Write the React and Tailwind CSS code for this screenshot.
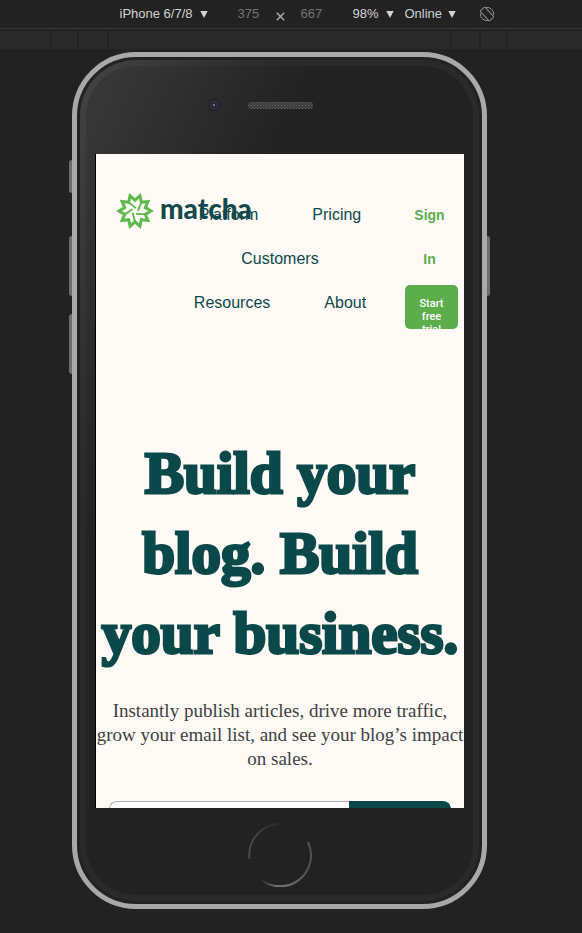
import React from "react";

const ARIAL = "font-['Liberation_Sans',Arial,sans-serif]";

function Picker({ label, width, options }) {
  return (
    <div className={"relative flex items-center " + width}>
      <select
        aria-label={label}
        className="w-full appearance-none bg-transparent p-0 text-[13px] leading-4 text-[#d2d2d2] outline-none"
      >
        {options.map((o) => (
          <option key={o}>{o}</option>
        ))}
      </select>
      <svg viewBox="0 0 8 7" className="pointer-events-none absolute right-0 h-[7px] w-2 fill-[#d2d2d2]" aria-hidden="true">
        <path d="M.3 0h7.4L4 7z" />
      </svg>
    </div>
  );
}

function Size({ label, value }) {
  return (
    <input
      aria-label={label}
      defaultValue={value}
      className="w-[22px] bg-transparent p-0 text-[13px] leading-4 text-[#747474] outline-none"
    />
  );
}

function Toolbar() {
  return (
    <div className="flex h-7 items-center justify-center pl-8">
      <Picker label="Device" width="w-[88px]" options={["iPhone 6/7/8"]} />
      <div className="mr-[30px] ml-[30px] flex items-center">
        <Size label="Width" value="375" />
        <svg viewBox="0 0 9 9" className="mx-4 mt-1 h-[9px] w-[9px] stroke-[#a8a8a8]" strokeWidth="1.5" aria-hidden="true">
          <path d="M.8.8l7.4 7.4M8.2.8L.8 8.2" />
        </svg>
        <Size label="Height" value="667" />
      </div>
      <div className="flex items-center gap-[11px]">
        <Picker label="Zoom" width="w-[41px]" options={["98%"]} />
        <Picker label="Throttling" width="w-[51px]" options={["Online"]} />
      </div>
      <button type="button" aria-label="Rotate" className="ml-[23px]">
        <svg viewBox="0 0 16 16" className="h-4 w-4 fill-none stroke-[#8d8d8d]" strokeWidth="1">
          <rect x="4.8" y="1.2" width="6.4" height="13.6" rx="1" transform="rotate(-42 8 8)" />
          <path d="M6.8 1.4A6.8 6.8 0 0 1 14.7 8.8M9.2 14.6A6.8 6.8 0 0 1 1.3 7.2" />
        </svg>
      </button>
    </div>
  );
}

function Ruler() {
  return (
    <div className="mt-[2px] flex h-[18px] justify-center bg-[#2a2a2a] pr-6">
      <div className="flex h-4">
        <div className="w-[27px] border-l-2 border-[#222]" />
        <div className="w-[30px] border-l-2 border-[#222]" />
        <div className="w-[345px] border-x-2 border-[#222]" />
        <div className="w-[29px] border-r-2 border-[#222]" />
        <div className="w-[27px] border-r-2 border-[#222]" />
      </div>
    </div>
  );
}

function LogoMark() {
  const n = 10;
  const pt = (r, deg) => {
    const a = (deg * Math.PI) / 180;
    return (20 + r * Math.cos(a)).toFixed(2) + " " + (20 + r * Math.sin(a)).toFixed(2);
  };
  const star = Array.from({ length: n }, (_, i) => pt(16, i * 36) + " L" + pt(10.8, i * 36 + 18)).join(" L");
  const spokes = Array.from({ length: n / 2 }, (_, i) => "M" + pt(10.8, i * 72 + 18) + " L" + pt(3, i * 72 + 70)).join(" ");
  return (
    <svg viewBox="0 0 40 40" className="h-10 w-10 fill-none stroke-[#5fba4d]" aria-hidden="true">
      <path d={"M" + star + "Z"} strokeWidth="3" />
      <path d={spokes} strokeWidth="1.9" />
    </svg>
  );
}

const links = ["Platform", "Pricing", "Customers", "Resources", "About"];

function Header() {
  return (
    <header className="relative flex justify-end pt-[39px] pr-[6px]">
      <a href="#" className="absolute top-[37px] left-[19px] flex items-center text-[#14494b]">
        <LogoMark />
        <span className="ml-[5px] pb-[7px] font-['Lato',sans-serif] text-[28px] leading-8 font-black">matcha</span>
      </a>
      <nav className={"relative flex w-[240px] flex-wrap content-start justify-center " + ARIAL}>
        {links.map((l) => (
          <a key={l} href="#" className="px-[27px] text-base leading-[44px] text-[#0b484a]">
            {l}
          </a>
        ))}
      </nav>
      <div className="ml-[5px] w-[53px] text-center">
        <a href="#" className={"block pr-3 pl-2 text-sm leading-[44px] font-bold text-[#5aae4b] " + ARIAL}>
          Sign In
        </a>
        <button
          type="button"
          className="mt-1 flex h-11 w-full items-start justify-center overflow-hidden rounded-[5px] bg-[#5cad4c] px-3 pt-3 font-['Roboto',sans-serif] text-[11px] leading-[13px] font-medium text-white"
        >
          Start free trial
        </button>
      </div>
    </header>
  );
}

function Page() {
  return (
    <div className="aspect-[368/654] overflow-hidden bg-[#fffaf6] shadow-[-1px_0_0_#000]">
      <Header />
      <main className="text-center font-['Liberation_Serif',serif]">
        <h1 className="mt-[104px] text-[59px] leading-[80px] font-bold whitespace-nowrap text-[#0a484a] [-webkit-text-stroke:3px_#0a484a]">
          Build your
          <br />
          blog. Build
          <br />
          your business.
        </h1>
        <p className="mt-[26px] text-[19px] leading-6 whitespace-nowrap text-[#3d3f43]">
          Instantly publish articles, drive more traffic,
          <br />
          grow your email list, and see your blog’s impact
          <br />
          on sales.
        </p>
        <form className="mx-[13px] mt-[30px] flex h-12">
          <input
            type="email"
            aria-label="Email"
            className="min-w-0 flex-1 rounded-l-lg border border-r-0 border-[#a9b3b3] bg-white outline-none"
          />
          <button type="button" aria-label="Get started" className="w-[102px] rounded-r-lg bg-[#0a484a]" />
        </form>
      </main>
    </div>
  );
}

function Phone() {
  return (
    <div className="relative w-full max-w-[415px]">
      <div className="absolute top-[108px] -left-[3px] h-[33px] w-[3px] rounded-l-sm bg-[#6d6d6d]" />
      <div className="absolute top-[184px] -left-[3px] h-[60px] w-[3px] rounded-l-sm bg-[#6d6d6d]" />
      <div className="absolute top-[262px] -left-[3px] h-[60px] w-[3px] rounded-l-sm bg-[#6d6d6d]" />
      <div className="absolute top-[184px] -right-[3px] h-[60px] w-[3px] rounded-r-sm bg-[#6d6d6d]" />
      <div className="rounded-[64px] border-[5px] border-[#a8a8a8] bg-[#222] p-[3px]">
        <div className="rounded-[56px] bg-linear-to-br from-[#444] via-[#2a2a2a] via-25% to-[#2a2a2a] p-[6px]">
          <div className="rounded-[50px] bg-linear-to-br from-[#363636] from-5% to-[#222] to-30% pr-[9px] pb-2 pl-[10px]">
            <div className="flex h-[88px] items-center justify-center gap-[27px] pb-[10px]">
              <svg viewBox="0 0 14 14" className="h-[14px] w-[14px]" aria-hidden="true">
                <circle cx="7" cy="7" r="6.5" fill="#252526" />
                <circle cx="7" cy="7" r="3.8" fill="#2b2538" stroke="#39334a" />
                <circle cx="7" cy="7" r="1.1" fill="#8c86a6" />
              </svg>
              <svg viewBox="0 0 65 7" className="h-[7px] w-[65px]" aria-hidden="true">
                <defs>
                  <pattern id="mesh" width="3" height="3" patternUnits="userSpaceOnUse">
                    <rect width="3" height="3" fill="#3a3a3a" />
                    <path d="M0 0h1v1H0zM1.5 1.5h1v1h-1z" fill="#666" />
                  </pattern>
                </defs>
                <rect width="65" height="7" rx="3" fill="url(#mesh)" />
              </svg>
              <div className="w-[14px]" />
            </div>
            <Page />
            <button type="button" aria-label="Home" className="mx-auto mt-[15px] block h-16 w-16 rounded-full">
              <svg viewBox="0 0 64 64" className="h-16 w-16 fill-none" strokeWidth="2">
                <defs>
                  <linearGradient id="ringTop" x1="0" y1="0.3" x2="1" y2="0">
                    <stop offset="0" stopColor="#4a4a4a" />
                    <stop offset="1" stopColor="#222" />
                  </linearGradient>
                  <linearGradient id="ringBottom" x1="0" y1="0" x2="1" y2="0">
                    <stop offset="0" stopColor="#222" />
                    <stop offset="0.35" stopColor="#777" />
                    <stop offset="1" stopColor="#505050" />
                  </linearGradient>
                </defs>
                <path d="M1.5 36A31 31 0 0 1 40 2" stroke="url(#ringTop)" />
                <path d="M12 56A31 31 0 0 0 60 19" stroke="url(#ringBottom)" />
              </svg>
            </button>
          </div>
        </div>
      </div>
    </div>
  );
}

export default function App() {
  return (
    <div className={"min-h-screen overflow-hidden bg-[#222] " + ARIAL}>
      <div className="border-b border-[#383838]">
        <Toolbar />
      </div>
      <Ruler />
      <div className="mt-[3px] flex justify-center pr-[23px] pb-6">
        <Phone />
      </div>
    </div>
  );
}
